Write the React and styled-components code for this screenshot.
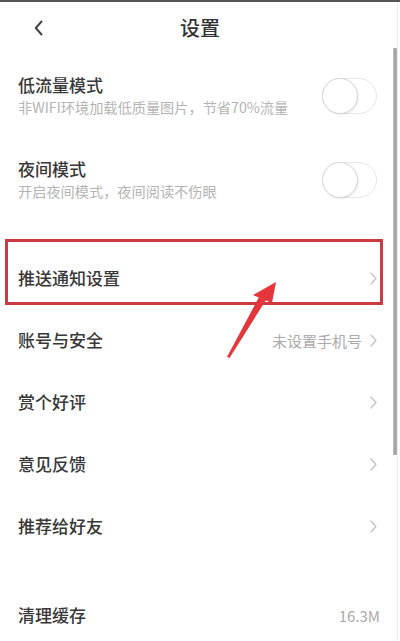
import React from 'react';
import styled, { createGlobalStyle } from 'styled-components';

const Global = createGlobalStyle`
  html, body { margin: 0; padding: 0; background: #fff; }
  body { font-family: "Noto Sans CJK SC", "Noto Sans", sans-serif; }
`;

const Page = styled.div`
  position: relative;
  width: 400px;
  height: 641px;
  overflow: hidden;
  background: #fff;
  box-shadow: inset 0 2px 0 #565656;
  padding-top: 2px;
  box-sizing: border-box;
`;

const Header = styled.header`
  height: 52px;
  display: grid;
  grid-template-columns: 80px 1fr 80px;
  align-items: center;
`;

const Back = styled.div`
  padding-left: 34px;
  display: flex;
  align-items: center;
`;

const Title = styled.h1`
  margin: 0;
  text-align: center;
  font-size: 20px;
  font-weight: 500;
  color: #333;
  line-height: 26px;
`;

const List = styled.div`
  display: flex;
  flex-direction: column;
`;

const Row = styled.div`
  height: ${p => p.$h || 62}px;
  display: flex;
  align-items: center;
  justify-content: space-between;
  padding: 0 23px 0 18px;
  box-sizing: border-box;
`;

const Spacer = styled.div`
  height: ${p => p.$h}px;
`;

const TextBlock = styled.div`
  display: flex;
  flex-direction: column;
`;

const Label = styled.div`
  font-size: 17px;
  line-height: 22px;
  font-weight: 500;
  color: #383838;
`;

const Sub = styled.div`
  font-size: 14.2px;
  line-height: 22px;
  color: #b4b4b4;
`;

const Right = styled.div`
  display: flex;
  align-items: center;
  gap: 8px;
  margin-right: ${p => (p.$tight ? -3 : 0)}px;
`;

const Value = styled.span`
  font-size: 15px;
  color: #ababab;
`;

const Toggle = styled.div`
  width: 55px;
  height: 36px;
  border-radius: 18px;
  border: 1px solid #e6e6e6;
  box-sizing: border-box;
  position: relative;
  background: #fff;
`;

const Knob = styled.div`
  position: absolute;
  left: -1px;
  top: -1px;
  width: 36px;
  height: 36px;
  border-radius: 50%;
  border: 1px solid #d6d6d6;
  box-sizing: border-box;
  background: #fff;
  box-shadow: 1px 1px 2px rgba(0,0,0,0.08);
`;

const Highlight = styled.div`
  position: absolute;
  left: 5px;
  top: 239px;
  width: 378px;
  height: 66px;
  border: 3px solid #cd3a42;
  box-sizing: border-box;
  pointer-events: none;
`;

const Overlay = styled.svg`
  position: absolute;
  left: 0;
  top: 0;
  pointer-events: none;
`;

const ScrollTrack = styled.div`
  position: absolute;
  right: 2px;
  top: 2px;
  bottom: 0;
  width: 1px;
  background: #ececec;
`;

const ScrollThumb = styled.div`
  position: absolute;
  right: 3px;
  top: 48px;
  width: 4px;
  height: 407px;
  background: linear-gradient(to right, #c4c4c4, #9c9c9c 50%, #b8b8b8);
  border-radius: 1px;
`;

const Chevron = () => (
  <svg width="7" height="13" viewBox="0 0 7 13">
    <polyline points="1,1 6,6.5 1,12" fill="none" stroke="#c2c2c2" strokeWidth="1.3" strokeLinecap="round" strokeLinejoin="round" />
  </svg>
);

const BackIcon = () => (
  <svg width="9" height="16" viewBox="0 0 9 16">
    <polyline points="7.5,1.5 1.8,8 7.5,14.5" fill="none" stroke="#444" strokeWidth="2" strokeLinecap="round" strokeLinejoin="round" />
  </svg>
);

const Switch = () => (
  <Toggle>
    <Knob />
  </Toggle>
);

const links = [
  { label: '推送通知设置' },
  { label: '账号与安全', value: '未设置手机号' },
  { label: '赏个好评' },
  { label: '意见反馈' },
  { label: '推荐给好友' },
];

export default function App() {
  return (
    <>
      <Global />
      <Page>
        <Header>
          <Back><BackIcon /></Back>
          <Title>设置</Title>
          <div />
        </Header>
        <List>
          <Row $h={84}>
            <TextBlock>
              <Label>低流量模式</Label>
              <Sub>非WIFI环境加载低质量图片，节省70%流量</Sub>
            </TextBlock>
            <Switch />
          </Row>
          <Row $h={84}>
            <TextBlock>
              <Label>夜间模式</Label>
              <Sub>开启夜间模式，夜间阅读不伤眼</Sub>
            </TextBlock>
            <Switch />
          </Row>
          <Spacer $h={25} />
          {links.map(l => (
            <Row key={l.label}>
              <Label>{l.label}</Label>
              <Right>
                {l.value && <Value>{l.value}</Value>}
                <Chevron />
              </Right>
            </Row>
          ))}
          <Spacer $h={27} />
          <Row>
            <Label>清理缓存</Label>
            <Right $tight>
              <Value>16.3M</Value>
            </Right>
          </Row>
        </List>

        <Highlight />
        <Overlay width="400" height="641" viewBox="0 0 400 641">
          <polygon points="227,357 229.5,358 266,300 259,297" fill="#e5363b" />
          <polygon points="276,282 253,295 272,303" fill="#e5363b" />
        </Overlay>
        <ScrollTrack />
        <ScrollThumb />
      </Page>
    </>
  );
}
